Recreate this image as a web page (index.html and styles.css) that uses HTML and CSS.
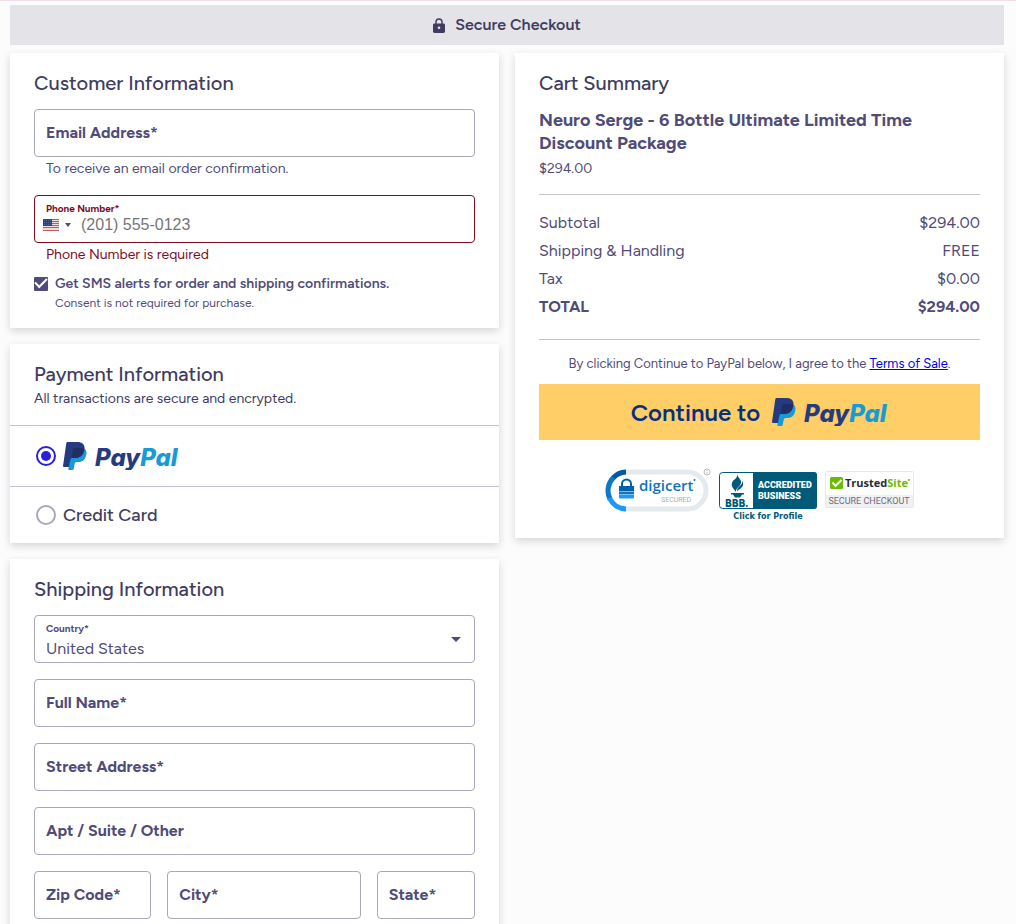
FILE: index.html
```html
<!DOCTYPE html>
<html lang="en">
<head>
    <meta charset="UTF-8">
    <meta name="viewport" content="width=device-width, initial-scale=1.0">
    <title>Secure Checkout</title>
    <link rel="stylesheet" href="styles.css">
</head>
<body>

<header class="secure-bar">
    <svg width="12" height="15" viewBox="0 0 12 15" aria-hidden="true">
        <path d="M3 6V4a3 3 0 0 1 6 0v2" fill="none" stroke="#403c5f" stroke-width="1.4"/>
        <rect x="0" y="5.5" width="12" height="9.5" rx="1.4" fill="#403c5f"/>
        <circle cx="6" cy="9.7" r="1.3" fill="#e4e3e8"/>
    </svg>
    <span>Secure Checkout</span>
</header>

<main class="checkout">
    <form class="column">

        <!-- Customer information -->
        <section class="card">
            <h2>Customer Information</h2>
            <div class="field">
                <input type="email" id="email">
                <label for="email">Email Address*</label>
            </div>
            <p class="hint">To receive an email order confirmation.</p>

            <div class="field field-small field-error">
                <input type="tel" id="phone" placeholder="(201) 555-0123">
                <label for="phone">Phone Number*</label>
                <button type="button" class="flag-button" aria-label="United States">
                    <svg width="16" height="12" viewBox="0 0 16 12">
                        <rect width="16" height="12" fill="#e9dcdd"/>
                        <path d="M0 .5h16M0 2.5h16M0 4.5h16M0 6.5h16M0 8.5h16M0 11.5h16" stroke="#c4595c" stroke-width="1"/>
                        <rect width="9" height="7" fill="#33407c"/>
                        <path d="M1 1.5h7M1 3.5h7M1 5.5h7" stroke="#6873a0" stroke-width=".6" stroke-dasharray="1 1"/>
                    </svg>
                    <svg width="6" height="4" viewBox="0 0 6 4"><path d="M0 0h6L3 4z" fill="#504c78"/></svg>
                </button>
            </div>
            <p class="hint error">Phone Number is required</p>

            <div class="sms">
                <input type="checkbox" id="sms" checked>
                <label for="sms">Get SMS alerts for order and shipping confirmations.</label>
                <p>Consent is not required for purchase.</p>
            </div>
        </section>

        <!-- Payment information -->
        <section class="card payment">
            <div class="payment-head">
                <h2>Payment Information</h2>
                <p>All transactions are secure and encrypted.</p>
            </div>
            <div class="method method-paypal">
                <input type="radio" name="method" id="paypal" checked>
                <label for="paypal" aria-label="PayPal">
                    <svg width="116" height="28" viewBox="0 0 116 28">
                        <g transform="scale(.3333)">
                            <path fill="#179bd7" d="M60 17 C72 22 72 33 69 41 C66 55 56 60 45 60 H41 C37 60 36 62 35 66 L32 81 Q31 84 28 84 H18 Q15 84 16 81 L26 22Z"/>
                            <path fill="#253b80" d="M14 0 H42 C58 0 67 8 64 22 C61 41 50 48 35 48 H28 C24 48 23 50 22 54 L18 75 H3 Q0 75 0 72 L10 3 Q11 0 14 0Z"/>
                            <path fill="#222d65" d="M30 23 Q31 18 36 18 H56 Q62 18 64 20 C62 41 50 48 35 48 H26Z"/>
                        </g>
                        <text class="paypal-word" x="32" y="24"><tspan fill="#253b80">Pay</tspan><tspan fill="#179bd7">Pal</tspan></text>
                    </svg>
                </label>
            </div>
            <div class="method">
                <input type="radio" name="method" id="card">
                <label for="card">Credit Card</label>
            </div>
        </section>

        <!-- Shipping information -->
        <section class="card shipping">
            <h2>Shipping Information</h2>
            <div class="field field-small">
                <select id="country">
                    <option>United States</option>
                </select>
                <label for="country">Country*</label>
                <svg class="select-arrow" width="10" height="5" viewBox="0 0 10 5" aria-hidden="true"><path d="M0 0h10L5 5z" fill="#504c78"/></svg>
            </div>
            <div class="field">
                <input type="text" id="name">
                <label for="name">Full Name*</label>
            </div>
            <div class="field">
                <input type="text" id="street">
                <label for="street">Street Address*</label>
            </div>
            <div class="field">
                <input type="text" id="apt">
                <label for="apt">Apt / Suite / Other</label>
            </div>
            <div class="field-row">
                <div class="field">
                    <input type="text" id="zip">
                    <label for="zip">Zip Code*</label>
                </div>
                <div class="field">
                    <input type="text" id="city">
                    <label for="city">City*</label>
                </div>
                <div class="field">
                    <input type="text" id="state">
                    <label for="state">State*</label>
                </div>
            </div>
        </section>
    </form>

    <!-- Cart summary -->
    <aside class="card cart">
        <h2>Cart Summary</h2>
        <h3>Neuro Serge - 6 Bottle Ultimate Limited Time Discount Package</h3>
        <p class="price">$294.00</p>
        <table class="totals">
            <tbody>
                <tr><td>Subtotal</td><td>$294.00</td></tr>
                <tr><td>Shipping &amp; Handling</td><td>FREE</td></tr>
                <tr><td>Tax</td><td>$0.00</td></tr>
                <tr class="total"><td>TOTAL</td><td>$294.00</td></tr>
            </tbody>
        </table>
        <p class="terms">By clicking Continue to PayPal below, I agree to the <a href="#">Terms of Sale</a>.</p>
        <button type="button" class="continue">
            <span>Continue to</span>
            <svg width="116" height="28" viewBox="0 0 116 28" role="img" aria-label="PayPal">
                <g transform="scale(.3333)">
                    <path fill="#179bd7" d="M60 17 C72 22 72 33 69 41 C66 55 56 60 45 60 H41 C37 60 36 62 35 66 L32 81 Q31 84 28 84 H18 Q15 84 16 81 L26 22Z"/>
                    <path fill="#253b80" d="M14 0 H42 C58 0 67 8 64 22 C61 41 50 48 35 48 H28 C24 48 23 50 22 54 L18 75 H3 Q0 75 0 72 L10 3 Q11 0 14 0Z"/>
                    <path fill="#222d65" d="M30 23 Q31 18 36 18 H56 Q62 18 64 20 C62 41 50 48 35 48 H26Z"/>
                </g>
                <text class="paypal-word" x="32" y="24"><tspan fill="#253b80">Pay</tspan><tspan fill="#179bd7">Pal</tspan></text>
            </svg>
        </button>

        <div class="badges">
            <svg width="106" height="44" viewBox="0 0 106 44" role="img" aria-label="DigiCert Secured">
                <rect x="3" y="4" width="98" height="37" rx="18.5" fill="#fff" stroke="#e5eaef" stroke-width="5"/>
                <path d="M21 4A18.5 18.5 0 0 0 8 10" fill="none" stroke="#005a9e" stroke-width="5"/>
                <path d="M8.5 9.5A18.5 18.5 0 0 0 5 31" fill="none" stroke="#0b78c8" stroke-width="5"/>
                <path d="M4.5 30A18.5 18.5 0 0 0 21 41" fill="none" stroke="#1b98fa" stroke-width="5"/>
                <path d="M17 19v-3a4.5 4.5 0 0 1 9 0v3" fill="none" stroke="#0061a8" stroke-width="2"/>
                <path d="M14 18h15v5H14z" fill="#0061a8"/>
                <path d="M14 23.500h15v3H14z" fill="#0b78c8"/>
                <path d="M14 27h15v2.5q0 1-1 1H15q-1 0-1-1z" fill="#1b98fa"/>
                <text class="digicert-word" x="34" y="23">digicert</text>
                <circle cx="89.5" cy="12" r="1" fill="#0f75bc"/>
                <text class="digicert-sub" x="56" y="34">SECURED</text>
                <circle cx="102" cy="4" r="3" fill="#fff" stroke="#a9a9b5" stroke-width=".8"/>
                <path d="M102 2.2v.8M102 3.7v2" stroke="#a9a9b5" stroke-width=".8"/>
            </svg>
            <svg width="98" height="54" viewBox="0 0 98 54" role="img" aria-label="BBB Accredited Business">
                <rect x=".5" y="4.5" width="97" height="36" rx="3" fill="#fff" stroke="#005a78"/>
                <path d="M34 4h61q3 0 3 3v31q0 3-3 3H34z" fill="#005a78"/>
                <path d="M18 6c1 4 5 6 4 9-1 4-5 4-5 9-3-4-5-6-4-9 1-4 6-4 5-9zM23 13c3 4 0 7-5 10 0-5 6-5 5-10z" fill="#005a78"/>
                <path d="M12 25h13v1.5h-2l-2 3h-5l-2-3h-2z" fill="#005a78"/>
                <text class="bbb-word" x="6" y="39">BBB.</text>
                <text class="bbb-text" x="39" y="20">ACCREDITED</text>
                <text class="bbb-text" x="39" y="31">BUSINESS</text>
                <text class="bbb-link" x="49" y="51">Click for Profile</text>
            </svg>
            <svg width="89" height="37" viewBox="0 0 89 37" role="img" aria-label="TrustedSite Secure Checkout">
                <rect x=".5" y=".5" width="88" height="36" rx="1" fill="#fff" stroke="#e9e9eb"/>
                <path d="M1 24h87v12H1z" fill="#f1f1f3"/>
                <rect x="5" y="6" width="13" height="12" rx="1.5" fill="#69bd00"/>
                <path d="M7.5 11.5l3 3.5 6-6" fill="none" stroke="#fff" stroke-width="2"/>
                <text class="trusted-word" x="20" y="16"><tspan fill="#272b35">Trusted</tspan><tspan fill="#69bd00">Site</tspan></text>
                <circle cx="84" cy="9" r="1" fill="#69bd00"/>
                <text class="trusted-sub" x="44" y="33">SECURE CHECKOUT</text>
            </svg>
        </div>
    </aside>
</main>

</body>
</html>
```
FILE: styles.css
```css
/* General styling */
* {
    box-sizing: border-box;
}

body {
    margin: 0;
    padding: 4px 12px 24px 10px;
    border-top: 1px solid #f1dfe5;
    background-color: #fcfcfc;
    color: #504c78;
    font-family: Figtree, Inter, "Liberation Sans", sans-serif;
    font-size: 16px;
}

h2, h3, p {
    margin: 0;
}

h2 {
    margin-bottom: 12px;
    color: #403c5f;
    font-size: 20px;
    font-weight: 500;
    line-height: 28px;
}

.secure-bar {
    display: flex;
    justify-content: center;
    align-items: center;
    gap: 10px;
    height: 40px;
    margin-bottom: 8px;
    background-color: #e4e3e8;
    color: #403c5f;
    font-size: 16px;
    font-weight: 600;
    line-height: 20px;
}

/* Page layout */
.checkout {
    display: grid;
    grid-template-columns: 1fr 1fr;
    align-items: start;
    gap: 16px;
}

.column {
    display: flex;
    flex-direction: column;
    gap: 16px;
}

.card {
    padding: 16px 24px;
    background-color: #fff;
    box-shadow: 0 3px 8px rgba(40, 40, 60, 0.18);
}

/* Form fields */
.field {
    position: relative;
}

.field input,
.field select {
    display: block;
    width: 100%;
    height: 48px;
    padding: 0 11px;
    border: 1px solid #a9a7b9;
    border-radius: 4px;
    outline: none;
    background-color: #fff;
    color: #504c78;
    font-family: inherit;
    font-size: 16px;
    appearance: none;
}

.field label {
    position: absolute;
    top: 12px;
    left: 12px;
    font-size: 16px;
    font-weight: 700;
    line-height: 24px;
    pointer-events: none;
}

.field-small label {
    top: 6px;
    font-size: 10px;
    line-height: 16px;
}

.field-small select {
    padding-top: 18px;
}

.select-arrow {
    position: absolute;
    top: 22px;
    right: 14px;
}

.field-error input {
    padding: 12px 11px 0 46px;
    border-color: #7e0e1f;
    font-family: "Liberation Sans", Arial, sans-serif;
}

.field-error input::placeholder {
    color: #757575;
}

.field-error label,
.error {
    color: #7e0e1f;
}

.flag-button {
    position: absolute;
    top: 20px;
    left: 9px;
    display: flex;
    align-items: center;
    gap: 6px;
    height: 20px;
    padding: 0;
    border: none;
    background: none;
    cursor: pointer;
}

.hint {
    margin-bottom: 14px;
    padding-left: 12px;
    font-size: 14px;
    line-height: 24px;
}

.hint.error {
    margin-bottom: 6px;
}

.sms {
    display: grid;
    grid-template-columns: 14px 1fr;
    align-items: center;
    column-gap: 7px;
    font-size: 14px;
    line-height: 21px;
}

.sms input {
    display: grid;
    place-items: center;
    width: 14px;
    height: 14px;
    margin: 0;
    border-radius: 1px;
    background-color: #504c78;
    appearance: none;
}

/* Tick mark */
.sms input:checked::before {
    content: "";
    width: 10px;
    height: 5px;
    margin-bottom: 4px;
    border: solid #fff;
    border-width: 0 0 2px 2px;
    transform: rotate(-45deg);
}

.sms label {
    font-weight: 600;
}

.sms p {
    grid-column: 2;
    font-size: 12px;
    line-height: 18px;
}

/* Payment methods */
.payment {
    padding: 0;
}

.payment-head {
    padding: 16px 24px;
    color: #403c5f;
    font-size: 14px;
    line-height: 21px;
}

.payment-head h2 {
    margin: 0;
}

.method {
    display: flex;
    align-items: center;
    gap: 7px;
    height: 57px;
    padding: 0 26px;
    border-top: 1px solid #c4c2d0;
    color: #403c5f;
    font-size: 18px;
    font-weight: 500;
}

.method-paypal {
    height: 61px;
}

.method label {
    display: flex;
}

.method input {
    display: grid;
    place-content: center;
    width: 20px;
    height: 20px;
    margin: 0;
    border: 2px solid #a9a7b9;
    border-radius: 50%;
    appearance: none;
}

.method input:checked {
    border-color: #2a1fdd;
}

.method input:checked::before {
    content: "";
    width: 10px;
    height: 10px;
    border-radius: 50%;
    background-color: #2a1fdd;
}

.paypal-word {
    font-family: Inter, sans-serif;
    font-size: 24px;
    font-style: italic;
    font-weight: 800;
}

/* Shipping */
.shipping {
    padding-bottom: 24px;
}

.shipping .field {
    margin-bottom: 16px;
}

.field-row {
    display: grid;
    grid-template-columns: 117fr 193fr 98fr;
    gap: 16px;
}

/* Cart summary */
.cart h3 {
    font-size: 18px;
    font-weight: 700;
    line-height: 23px;
}

.price {
    margin-top: 4px;
    padding-bottom: 15px;
    border-bottom: 1px solid #c4c2d0;
    font-size: 14px;
    line-height: 20px;
}

.totals {
    width: 100%;
    margin: 14px 0 18px;
    border-collapse: collapse;
    font-size: 16px;
    line-height: 28px;
}

.totals td {
    padding: 0;
}

.totals td:last-child {
    text-align: right;
}

.total {
    font-weight: 700;
}

.terms {
    padding: 14px 0 10px;
    border-top: 1px solid #c4c2d0;
    font-size: 13px;
    line-height: 20px;
    text-align: center;
}

.terms a {
    color: #0000ee;
}

.continue {
    display: flex;
    justify-content: center;
    align-items: center;
    gap: 12px;
    width: 100%;
    height: 56px;
    padding: 0;
    border: none;
    background-color: #ffce66;
    color: #043083;
    font-family: inherit;
    font-size: 24px;
    font-weight: 600;
    cursor: pointer;
}

.badges {
    display: flex;
    justify-content: center;
    align-items: flex-start;
    gap: 8px;
    padding-top: 28px;
}

.badges svg:last-child {
    margin-top: 3px;
}

.digicert-word {
    fill: #0f75bc;
    font-family: "Open Sans", sans-serif;
    font-size: 15px;
    font-weight: 600;
}

.digicert-sub {
    fill: #a9b0b8;
    font-family: Roboto, sans-serif;
    font-size: 7px;
}

.bbb-word {
    fill: #005a78;
    font-size: 11px;
    font-weight: 800;
}

.bbb-text {
    fill: #fff;
    font-family: Roboto, sans-serif;
    font-size: 9px;
    font-weight: 900;
}

.bbb-link {
    fill: #005a78;
    font-family: "DejaVu Sans", sans-serif;
    font-size: 8px;
    font-weight: 700;
    text-anchor: middle;
}

.trusted-word {
    font-family: "Open Sans", sans-serif;
    font-size: 11px;
    font-weight: 700;
}

.trusted-sub {
    fill: #6d6e78;
    font-family: Roboto, sans-serif;
    font-size: 9px;
    text-anchor: middle;
}
```
